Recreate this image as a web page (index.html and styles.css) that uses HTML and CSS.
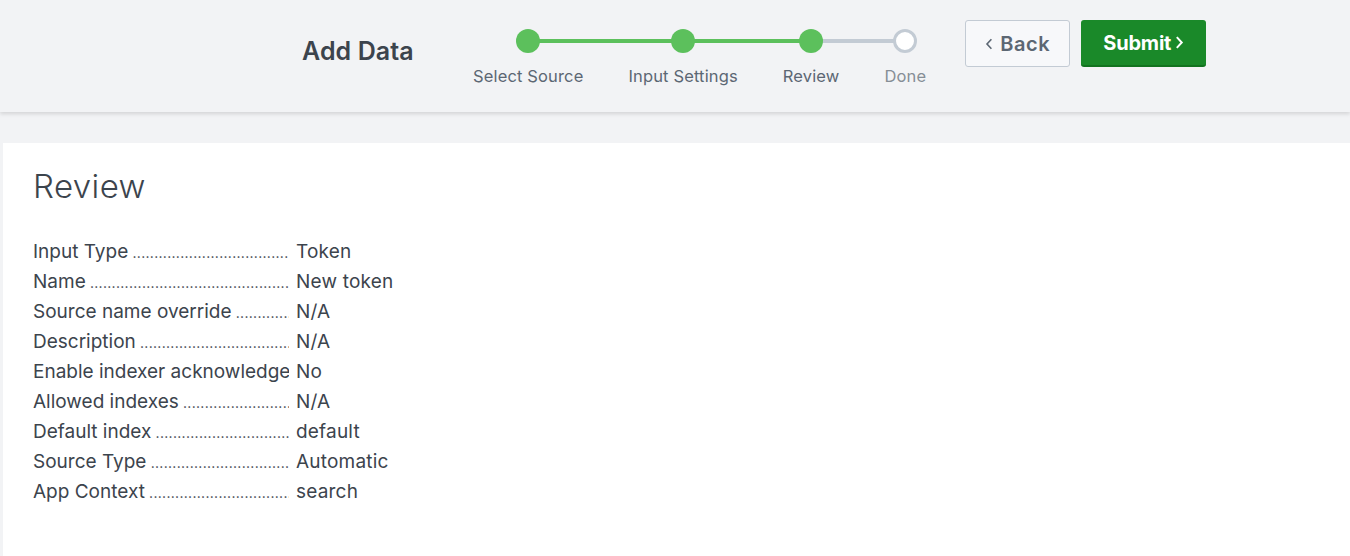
FILE: index.html
```html
<!DOCTYPE html>
<html lang="en">
<head>
    <meta charset="UTF-8">
    <meta name="viewport" content="width=device-width, initial-scale=1.0">
    <title>Add Data - Review</title>
    <link rel="stylesheet" href="styles.css">
</head>
<body>
    <header class="wizard-bar">
        <div class="wizard-inner">
            <h1 class="wizard-title">Add Data</h1>

            <!-- Step indicator -->
            <ol class="steps">
                <li class="step done"><span class="dot"></span><span class="label">Select Source</span></li>
                <li class="step done"><span class="dot"></span><span class="label">Input Settings</span></li>
                <li class="step current"><span class="dot"></span><span class="label">Review</span></li>
                <li class="step todo"><span class="dot"></span><span class="label">Done</span></li>
            </ol>

            <div class="wizard-actions">
                <button class="btn btn-back">
                    <svg class="chev" viewBox="0 0 10 16" width="8" height="14"><path d="M8 2 L2.5 8 L8 14" fill="none" stroke="currentColor" stroke-width="2"/></svg>
                    Back
                </button>
                <button class="btn btn-submit">
                    Submit
                    <svg class="chev" viewBox="0 0 10 16" width="9" height="15"><path d="M2 2 L7.5 8 L2 14" fill="none" stroke="currentColor" stroke-width="2.2"/></svg>
                </button>
            </div>
        </div>
    </header>

    <main class="panel">
        <h2 class="panel-title">Review</h2>

        <dl class="review-list">
            <div class="review-row"><dt>Input Type</dt><dd>Token</dd></div>
            <div class="review-row"><dt>Name</dt><dd>New token</dd></div>
            <div class="review-row"><dt>Source name override</dt><dd>N/A</dd></div>
            <div class="review-row"><dt>Description</dt><dd>N/A</dd></div>
            <div class="review-row"><dt>Enable indexer acknowledgement</dt><dd>No</dd></div>
            <div class="review-row"><dt>Allowed indexes</dt><dd>N/A</dd></div>
            <div class="review-row"><dt>Default index</dt><dd>default</dd></div>
            <div class="review-row"><dt>Source Type</dt><dd>Automatic</dd></div>
            <div class="review-row"><dt>App Context</dt><dd>search</dd></div>
        </dl>
    </main>
</body>
</html>
```

FILE: styles.css
```css
/* General */
body {
    margin: 0;
    font-family: Inter, 'Open Sans', sans-serif;
    background: #f2f3f5;
    color: #3c444d;
    height: 556px;
    overflow: hidden;
}

/* Wizard header */
.wizard-bar {
    height: 112px;
    background: #f2f3f5;
    box-shadow: 0 2px 4px rgba(0, 0, 0, 0.13);
    position: relative;
}

.wizard-inner {
    display: flex;
    align-items: flex-start;
    padding-left: 302px;
}

.wizard-title {
    width: 171px;
    margin: 35px 0 0;
    font-size: 25px;
    font-weight: 600;
    line-height: 32px;
    color: #3c444d;
    letter-spacing: 0.1px;
    white-space: nowrap;
}

/* Steps */
.steps {
    display: flex;
    gap: 45px;
    list-style: none;
    margin: 0;
    padding: 0;
}

.step {
    position: relative;
    display: flex;
    flex-direction: column;
    align-items: center;
    padding-top: 29px;
}

.step::before,
.step::after {
    content: "";
    position: absolute;
    top: 39px;
    height: 4px;
    background: #5cc05c;
}

.step::before {
    right: 50%;
    left: -23px;
}

.step::after {
    left: 50%;
    right: -23px;
}

.step:first-child::before,
.step:last-child::after {
    display: none;
}

.step.current::after,
.step.todo::before {
    background: #c3cbd4;
}

.dot {
    position: relative;
    z-index: 1;
    width: 24px;
    height: 24px;
    border-radius: 50%;
    background: #5cc05c;
    box-sizing: border-box;
}

.step.todo .dot {
    background: #fff;
    border: 3px solid #c3cbd4;
}

.label {
    margin-top: 12px;
    font-size: 16.5px;
    line-height: 22px;
    color: #5c6773;
    letter-spacing: 0.15px;
    white-space: nowrap;
}

.step.todo .label {
    color: #868e96;
}

/* Buttons */
.wizard-actions {
    display: flex;
    gap: 11px;
    margin: 20px 0 0 39px;
}

.btn {
    display: flex;
    align-items: center;
    justify-content: center;
    gap: 7px;
    height: 47px;
    border-radius: 3px;
    font-family: inherit;
    font-size: 20px;
    font-weight: 700;
    cursor: pointer;
    box-sizing: border-box;
}

.btn-back {
    width: 105px;
    background: #f7f8fa;
    color: #5c6773;
    border: 1px solid #c3cbd4;
    font-weight: 600;
    letter-spacing: 0.6px;
}

.btn-submit {
    width: 125px;
    gap: 4px;
    background: #1a8929;
    color: #fff;
    border: none;
    border-bottom: 2px solid #12731f;
    letter-spacing: -0.2px;
}

.chev {
    display: block;
}

/* Review panel */
.panel {
    margin: 31px 0 0 3px;
    background: #fff;
    padding: 24px 30px 40px;
    min-height: 349px;
}

.panel-title {
    margin: 0 0 32px;
    font-size: 33px;
    font-weight: 300;
    line-height: 38px;
    color: #3c444d;
    letter-spacing: 0.4px;
}

.review-list {
    margin: 0;
}

.review-row {
    display: flex;
    gap: 7px;
    height: 30px;
    font-size: 19px;
    line-height: 30px;
}

.review-row dt {
    width: 256px;
    overflow: hidden;
    white-space: nowrap;
}

.review-row dt::after {
    content: " ..................................................................................................";
    font-size: 14px;
    letter-spacing: 0.3px;
}

.review-row dd {
    margin: 0;
    letter-spacing: 0.2px;
}
```
